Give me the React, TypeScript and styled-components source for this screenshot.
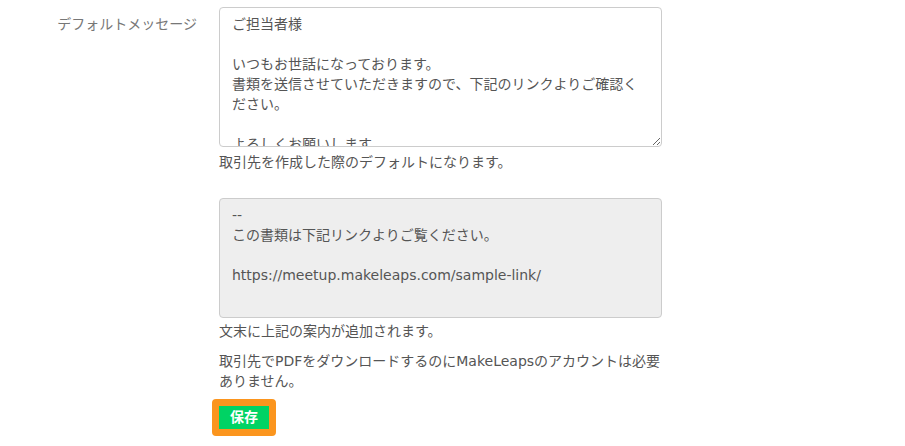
import React from "react";
import styled, { createGlobalStyle } from "styled-components";

const GlobalStyle = createGlobalStyle`
  html, body {
    margin: 0;
    padding: 0;
    background: #ffffff;
  }
  body {
    font-family: "DejaVu Sans", "Noto Sans CJK JP", sans-serif;
    font-size: 14px;
    line-height: 20px;
    color: #555555;
  }
`;

const FormRow = styled.div`
  display: grid;
  grid-template-columns: 197px 443px;
  column-gap: 22px;
  padding-top: 7px;
`;

const Label = styled.label`
  text-align: right;
  padding-top: 7px;
  color: #777777;
  font-size: 14px;
  line-height: 20px;
  white-space: nowrap;
`;

const Field = styled.div`
  display: flex;
  flex-direction: column;
  align-items: flex-start;
`;

const MessageInput = styled.textarea`
  box-sizing: border-box;
  width: 443px;
  height: 140px;
  margin: 0;
  padding: 6px 12px;
  border: 1px solid #cccccc;
  border-radius: 4px;
  font-family: inherit;
  font-size: 14px;
  line-height: 20px;
  color: #555555;
  background: #ffffff;
  resize: vertical;
  overflow: hidden;
  outline: none;
`;

const Help = styled.p<{ $top: number }>`
  margin: ${(p) => p.$top}px 0 0;
  width: 450px;
  font-size: 14px;
  line-height: 20px;
  color: #555555;
`;

const SignatureBox = styled.div`
  box-sizing: border-box;
  width: 443px;
  height: 120px;
  margin-top: 26px;
  padding: 6px 12px;
  border: 1px solid #cccccc;
  border-radius: 4px;
  background: #eeeeee;
  white-space: pre-line;
  font-size: 14px;
  line-height: 20px;
  color: #555555;
`;

const SaveButton = styled.button`
  margin: 8px 0 0 -7px;
  box-sizing: border-box;
  height: 37px;
  padding: 0 11px;
  border: 7px solid #fb951e;
  border-radius: 4px;
  background: #00d364;
  color: #ffffff;
  font-family: inherit;
  font-size: 14px;
  font-weight: bold;
  line-height: 23px;
  cursor: pointer;
`;

const defaultMessage =
  "ご担当者様\n\nいつもお世話になっております。\n書類を送信させていただきますので、下記のリンクよりご確認ください。\n\nよろしくお願いします。";

export default function App() {
  return (
    <>
      <GlobalStyle />
      <FormRow>
        <Label htmlFor="default-message">デフォルトメッセージ</Label>
        <Field>
          <MessageInput id="default-message" defaultValue={defaultMessage} />
          <Help $top={5}>取引先を作成した際のデフォルトになります。</Help>
          <SignatureBox>
            {"--\nこの書類は下記リンクよりご覧ください。\n\nhttps://meetup.makeleaps.com/sample-link/"}
          </SignatureBox>
          <Help $top={3}>文末に上記の案内が追加されます。</Help>
          <Help $top={10}>
            取引先でPDFをダウンロードするのにMakeLeapsのアカウントは必要ありません。
          </Help>
          <SaveButton type="button">保存</SaveButton>
        </Field>
      </FormRow>
    </>
  );
}
